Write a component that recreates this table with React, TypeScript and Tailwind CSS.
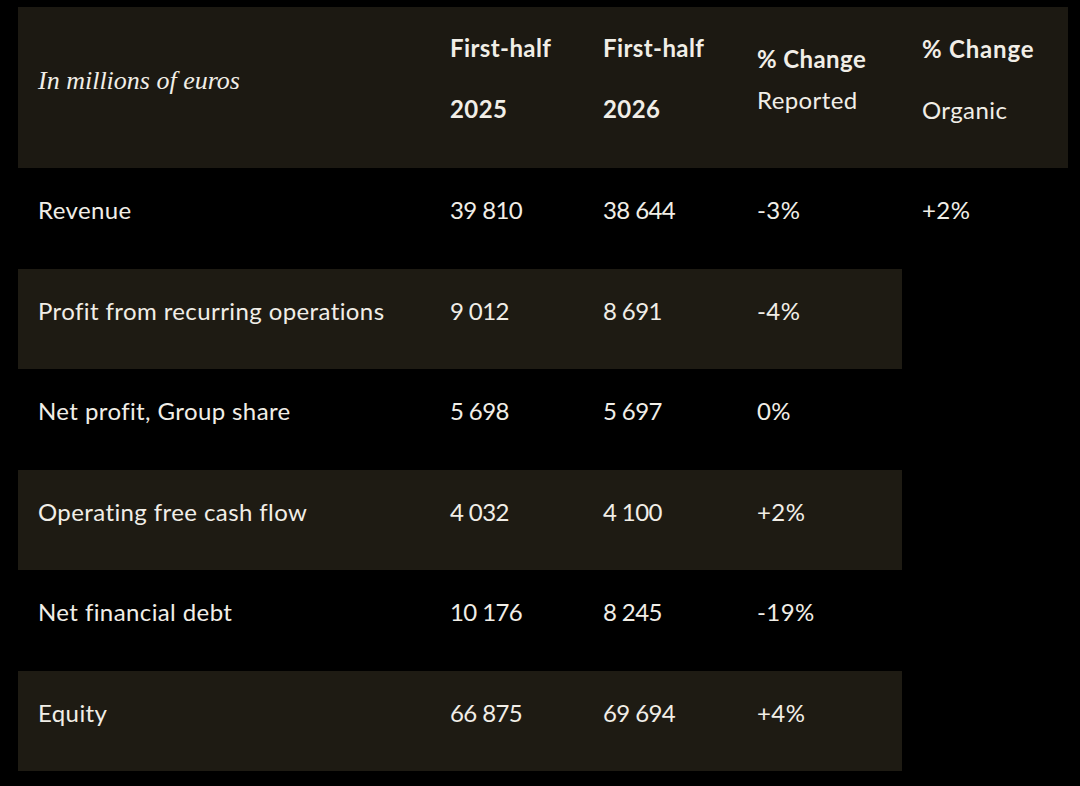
const ROWS = [
  { label: "Revenue", a: "39 810", b: "38 644", rep: "-3%", org: "+2%" },
  { label: "Profit from recurring operations", a: "9 012", b: "8 691", rep: "-4%" },
  { label: "Net profit, Group share", a: "5 698", b: "5 697", rep: "0%" },
  { label: "Operating free cash flow", a: "4 032", b: "4 100", rep: "+2%" },
  { label: "Net financial debt", a: "10 176", b: "8 245", rep: "-19%" },
  { label: "Equity", a: "66 875", b: "69 694", rep: "+4%" },
];

const App = () => {
  return (
    <div
      className="h-[786px] w-[1080px] overflow-hidden bg-black pl-[18px] pt-[7px] text-[24px] leading-[28px] tracking-[0.4px] text-[#f1eee7]"
      style={{ fontFamily: "Lato, 'Open Sans', sans-serif" }}
    >
      <div className="flex h-[161px] w-[1050px] bg-[#1c1912]">
        <div className="w-[432px] shrink-0 pl-[20px] pt-[59px]">
          <span
            className="text-[26px] italic tracking-normal"
            style={{ fontFamily: "'Liberation Serif', serif" }}
          >
            In millions of euros
          </span>
        </div>
        <div className="w-[153px] shrink-0 pt-[27px] font-bold">
          <div>First-half</div>
          <div className="mt-[33px]">2025</div>
        </div>
        <div className="w-[154px] shrink-0 pt-[27px] font-bold">
          <div>First-half</div>
          <div className="mt-[33px]">2026</div>
        </div>
        <div className="w-[165px] shrink-0 pt-[38px]">
          <div className="font-bold">% Change</div>
          <div className="mt-[13px]">Reported</div>
        </div>
        <div className="w-[146px] shrink-0 pt-[28px]">
          <div className="font-bold tracking-[0.8px]">% Change</div>
          <div className="mt-[33px]">Organic</div>
        </div>
      </div>

      {ROWS.map((row, i) => (
        <div
          key={row.label}
          className={
            i % 2 === 1
              ? "flex h-[100.5px] w-[884px] overflow-hidden bg-[#1e1b13] pt-[28px]"
              : "flex h-[100.5px] w-[1050px] pt-[28px]"
          }
        >
          <div className="w-[432px] shrink-0 pl-[20px]">{row.label}</div>
          <div className="w-[153px] shrink-0 tracking-[-0.6px]">{row.a}</div>
          <div className="w-[154px] shrink-0 tracking-[-0.6px]">{row.b}</div>
          <div className="w-[165px] shrink-0">{row.rep}</div>
          {row.org && <div className="w-[146px] shrink-0">{row.org}</div>}
        </div>
      ))}
    </div>
  );
};

export default App;
